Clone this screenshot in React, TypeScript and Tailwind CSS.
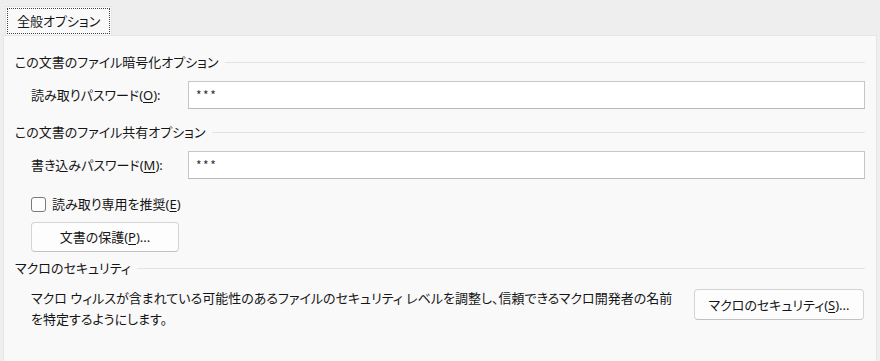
import React from 'react';

const font = "font-['Noto_Sans','Noto_Sans_CJK_JP',sans-serif] [font-feature-settings:'palt']";

function GroupHeading({ title }: { title: string }) {
    return (
        <div className="flex items-center h-[18px]">
            <span className="whitespace-nowrap">{title}</span>
            <div className="flex-1 h-px bg-[#e3e3e3] ml-[6px]" />
        </div>
    );
}

function PasswordRow({ label, keyChar }: { label: string; keyChar: string }) {
    return (
        <div className="flex items-center pl-[16px]">
            <span className="w-[157px] whitespace-nowrap">
                {label}(<span className="underline underline-offset-2">{keyChar}</span>):
            </span>
            <div className="flex-1 h-[28px] bg-white border border-[#c6c6c6] border-b-[#b8b8b8] flex items-center px-[7px] text-[#333] tracking-[1.5px] font-['Noto_Sans_CJK_JP',sans-serif] text-[12px]">
                ***
            </div>
        </div>
    );
}

export default function App() {
    return (
        <div className={`w-[880px] h-[361px] bg-[#eeeeee] flex flex-col text-[13px] leading-[18px] text-[#151515] ${font}`}>
            {/* Tab */}
            <div className="pt-[6px] pl-[5px] h-[35px]">
                <div className="w-[107px] h-[29px] bg-[#f9f9f9] border border-b-0 border-[#e6e6e6] p-px">
                    <div className="h-full border border-dotted border-[#444] flex items-center pl-[9px]">
                        全般オプション
                    </div>
                </div>
            </div>

            {/* Panel */}
            <div className="flex-1 mx-[3px] bg-[#f9f9f9] border border-b-0 border-[#e6e6e6] pl-[11px] pr-[11px] pt-[17px] flex flex-col">
                <GroupHeading title="この文書のファイル暗号化オプション" />
                <div className="mt-[10px]">
                    <PasswordRow label="読み取りパスワード" keyChar="O" />
                </div>

                <div className="mt-[14px]">
                    <GroupHeading title="この文書のファイル共有オプション" />
                </div>
                <div className="mt-[10px]">
                    <PasswordRow label="書き込みパスワード" keyChar="M" />
                </div>

                <div className="mt-[16px] pl-[16px] flex items-center h-[18px]">
                    <div className="w-[15px] h-[15px] rounded-[3px] border border-[#7a7a7a] bg-[#fdfdfd]" />
                    <span className="ml-[6px]">
                        読み取り専用を推奨(<span className="underline underline-offset-2">E</span>)
                    </span>
                </div>

                <div className="mt-[9px] pl-[16px]">
                    <button className="w-[148px] h-[30px] bg-[#fdfdfd] border border-[#d4d4d4] border-b-[#c2c2c2] rounded-[4px]">
                        文書の保護(<span className="underline underline-offset-2">P</span>)...
                    </button>
                </div>

                <div className="mt-[7px]">
                    <GroupHeading title="マクロのセキュリティ" />
                </div>

                <div className="mt-[12px] pl-[16px] flex items-start justify-between">
                    <p className="leading-[21px] whitespace-nowrap -mt-[1px]">
                        マクロ ウィルスが含まれている可能性のあるファイルのセキュリティ レベルを調整し、信頼できるマクロ開発者の名前
                        <br />
                        を特定するようにします。
                    </p>
                    <button className="w-[170px] h-[31px] mr-[1px] bg-[#fdfdfd] border border-[#d4d4d4] border-b-[#c2c2c2] rounded-[4px] whitespace-nowrap">
                        マクロのセキュリティ(<span className="underline underline-offset-2">S</span>)...
                    </button>
                </div>
            </div>
        </div>
    );
}
